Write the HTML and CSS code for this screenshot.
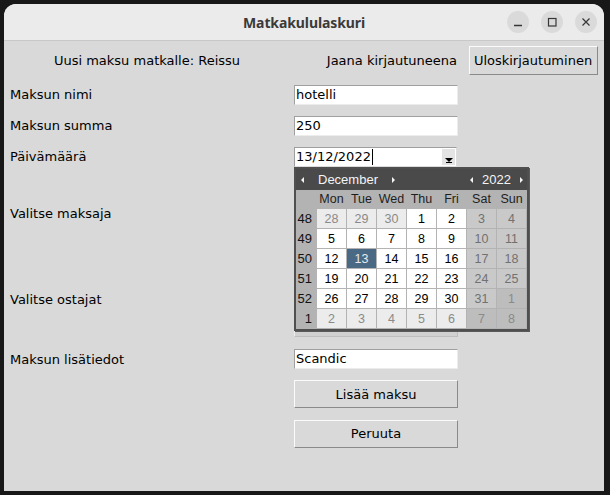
FILE: index.html
```html
<!DOCTYPE html>
<html lang="fi">
<head>
<meta charset="utf-8">
<title>Matkakululaskuri</title>
<link rel="stylesheet" href="styles.css">
</head>
<body>
<div class="window">
  <header class="titlebar">
    <span></span>
    <span class="title">Matkakululaskuri</span>
    <div class="wm-buttons">
      <span class="wm-btn"><svg width="10" height="10" viewBox="0 0 10 10"><path d="M1 8.5h8" stroke="#363636" stroke-width="1.3" fill="none"/></svg></span>
      <span class="wm-btn"><svg width="10" height="10" viewBox="0 0 10 10"><rect x="1.5" y="1.5" width="7.5" height="7.5" stroke="#363636" stroke-width="1.2" fill="none"/></svg></span>
      <span class="wm-btn"><svg width="10" height="10" viewBox="0 0 10 10"><path d="M1.5 1.5l7 7M8.5 1.5l-7 7" stroke="#363636" stroke-width="1.2" fill="none"/></svg></span>
    </div>
  </header>
  <main class="form">
    <div class="heading">Uusi maksu matkalle: Reissu</div>
    <div class="user">Jaana kirjautuneena</div>
    <div class="btn-cell"><div class="tk-btn logout">Uloskirjautuminen</div></div>

    <div class="lbl">Maksun nimi</div>
    <div class="field"><div class="tk-entry">hotelli</div></div>
    <div></div>

    <div class="lbl">Maksun summa</div>
    <div class="field"><div class="tk-entry">250</div></div>
    <div></div>

    <div class="lbl">Päivämäärä</div>
    <div class="field">
      <div class="tk-entry date-entry"><span class="date-text">13/12/2022</span><span class="caret"></span><span class="drop-btn"><span class="drop-arrow"></span></span></div>
    </div>
    <div></div>

    <div class="lbl">Valitse maksaja</div>
    <div class="field"></div>
    <div></div>

    <div class="lbl">Valitse ostajat</div>
    <div class="field bottom"><div class="listbox"></div></div>
    <div></div>

    <div class="lbl">Maksun lisätiedot</div>
    <div class="field"><div class="tk-entry">Scandic</div></div>
    <div></div>

    <div></div>
    <div class="field"><div class="tk-btn wide">Lisää maksu</div></div>
    <div></div>

    <div></div>
    <div class="field"><div class="tk-btn wide">Peruuta</div></div>
    <div></div>
  </main>

  <div class="calendar">
    <div class="cal-head">
      <div class="cal-nav month-nav"><span class="arr left"></span><span class="cal-title">December</span><span class="arr right"></span></div>
      <div class="cal-nav year-nav"><span class="arr left"></span><span class="cal-title">2022</span><span class="arr right"></span></div>
    </div>
    <div class="cal-grid">
      <div class="dn"></div><div class="dn">Mon</div><div class="dn">Tue</div><div class="dn">Wed</div><div class="dn">Thu</div><div class="dn">Fri</div><div class="dn">Sat</div><div class="dn">Sun</div>

      <div class="wk">48</div><div class="d other">28</div><div class="d other">29</div><div class="d other">30</div><div class="d">1</div><div class="d">2</div><div class="d we">3</div><div class="d we">4</div>
      <div class="wk">49</div><div class="d">5</div><div class="d">6</div><div class="d">7</div><div class="d">8</div><div class="d">9</div><div class="d we">10</div><div class="d we">11</div>
      <div class="wk">50</div><div class="d">12</div><div class="d sel">13</div><div class="d">14</div><div class="d">15</div><div class="d">16</div><div class="d we">17</div><div class="d we">18</div>
      <div class="wk">51</div><div class="d">19</div><div class="d">20</div><div class="d">21</div><div class="d">22</div><div class="d">23</div><div class="d we">24</div><div class="d we">25</div>
      <div class="wk">52</div><div class="d">26</div><div class="d">27</div><div class="d">28</div><div class="d">29</div><div class="d">30</div><div class="d we">31</div><div class="d other-we">1</div>
      <div class="wk">1</div><div class="d other">2</div><div class="d other">3</div><div class="d other">4</div><div class="d other">5</div><div class="d other">6</div><div class="d other-we">7</div><div class="d other-we">8</div>
    </div>
  </div>
</div>
</body>
</html>
```

FILE: styles.css
```css
* { box-sizing: border-box; margin: 0; padding: 0; }

html, body {
  width: 610px;
  height: 495px;
  overflow: hidden;
}

body {
  background: #181818;
  padding: 4px 6px 4px 4px;
  font-family: "DejaVu Sans", sans-serif;
  font-size: 13px;
  color: #000;
}

.window {
  width: 600px;
  height: 487px;
  background: #d9d9d9;
  border-radius: 12px 12px 0 0;
  overflow: hidden;
  position: relative;
  display: flex;
  flex-direction: column;
}

/* ---------- title bar ---------- */
.titlebar {
  flex: none;
  height: 37px;
  background: #ebebeb;
  border-bottom: 1px solid #c8c8c8;
  display: grid;
  grid-template-columns: 1fr auto 1fr;
  align-items: center;
}

.title {
  font-family: "Noto Sans", sans-serif;
  font-weight: 700;
  font-size: 14px;
  color: #3a3a3a;
  letter-spacing: -0.1px;
}

.wm-buttons {
  justify-self: end;
  display: flex;
  gap: 12px;
  padding-right: 7px;
}

.wm-btn {
  width: 22px;
  height: 22px;
  border-radius: 50%;
  background: #dadada;
  display: flex;
  align-items: center;
  justify-content: center;
}

/* ---------- form grid ---------- */
.form {
  flex: 1;
  display: grid;
  grid-template-columns: 286px 172px 1fr;
  grid-template-rows: 38px 31px 31px 31px 82px 90px 30px 40px 39px;
  align-items: center;
}

.heading {
  text-align: center;
}

.user {
  justify-self: end;
  padding-right: 5px;
}

.btn-cell {
  display: flex;
  justify-content: center;
}

.lbl {
  padding-left: 6px;
}

.field {
  padding-left: 4px;
  align-self: stretch;
  display: flex;
  align-items: center;
}

.field.bottom {
  align-items: flex-end;
  padding-bottom: 7px;
}

.tk-entry {
  width: 164px;
  height: 20px;
  background: #fff;
  border: 1px solid;
  border-color: #a0a0a0 #ececec #ececec #a0a0a0;
  padding-left: 1px;
  line-height: 18px;
  white-space: nowrap;
}

.tk-btn {
  background: #d9d9d9;
  border: 1px solid;
  border-color: #fbfbfb #8a8a8a #8a8a8a #fbfbfb;
  display: flex;
  align-items: center;
  justify-content: center;
}

.tk-btn.logout {
  width: 129px;
  height: 29px;
}

.tk-btn.wide {
  width: 164px;
  height: 28px;
}

.date-entry {
  width: 163px;
  display: flex;
  align-items: center;
  border-color: #9e9e9e #dcdcdc #dcdcdc #9e9e9e;
}

.caret {
  width: 1px;
  height: 16px;
  background: #000;
  margin-left: 1px;
}

.drop-btn {
  margin-left: auto;
  width: 13px;
  height: 16px;
  margin-right: 1px;
  background: #e4e4e4;
  display: flex;
  align-items: flex-end;
  justify-content: center;
  padding-bottom: 3px;
}

.drop-arrow {
  width: 0;
  height: 0;
  border-left: 4px solid transparent;
  border-right: 4px solid transparent;
  border-top: 4px solid #000;
  box-shadow: 0 2px 0 -1px #000;
}

.listbox {
  width: 164px;
  height: 72px;
  background: #d0d0d0;
  border-left: 1px solid #ededed;
  border-top: 1px solid #ededed;
  border-bottom: 1px solid #bdbdbd;
  border-right: 1px solid #bdbdbd;
}

/* ---------- calendar popup ---------- */
.calendar {
  position: absolute;
  top: 163px;
  left: 290px;
  border: 2px solid #4f4f4f;
  background: #b3b3b3;
  font-family: "Liberation Sans", Arial, sans-serif;
  font-size: 12px;
  box-shadow: 1px 1px 0 #5a5a5a;
}

.cal-head {
  height: 21px;
  background: #4a4a4a;
  color: #f4f4f4;
  font-size: 13px;
  display: flex;
  align-items: center;
  justify-content: space-between;
}

.cal-nav {
  display: flex;
  align-items: center;
}

.month-nav {
  padding-left: 5px;
  gap: 14px;
}

.year-nav {
  padding-right: 4px;
  gap: 9px;
}

.arr {
  width: 0;
  height: 0;
  border-top: 3px solid transparent;
  border-bottom: 3px solid transparent;
}

.arr.left { border-right: 3px solid #f4f4f4; }
.arr.right { border-left: 3px solid #f4f4f4; }

.cal-grid {
  display: grid;
  grid-template-columns: 20px repeat(7, 29px);
  grid-template-rows: 18px repeat(6, 19px);
  column-gap: 1px;
  row-gap: 1px;
  padding-right: 1px;
  padding-bottom: 1px;
  background: #b3b3b3;
}

.dn {
  display: flex;
  align-items: center;
  justify-content: center;
  color: #1e1e1e;
  font-size: 12.5px;
}

.wk {
  display: flex;
  align-items: center;
  justify-content: flex-end;
  padding-right: 4px;
  color: #111;
  font-size: 13px;
}

.d {
  background: #fff;
  color: #000;
  display: flex;
  align-items: center;
  justify-content: center;
  font-size: 12.5px;
}

.d.other { background: #ececec; color: #8a8a8a; }
.d.we { background: #c9c9c9; color: #717171; }
.d.other-we { background: #bdbdbd; color: #8a8a8a; }
.d.sel { background: #4a6984; color: #e6e9ee; }
```
